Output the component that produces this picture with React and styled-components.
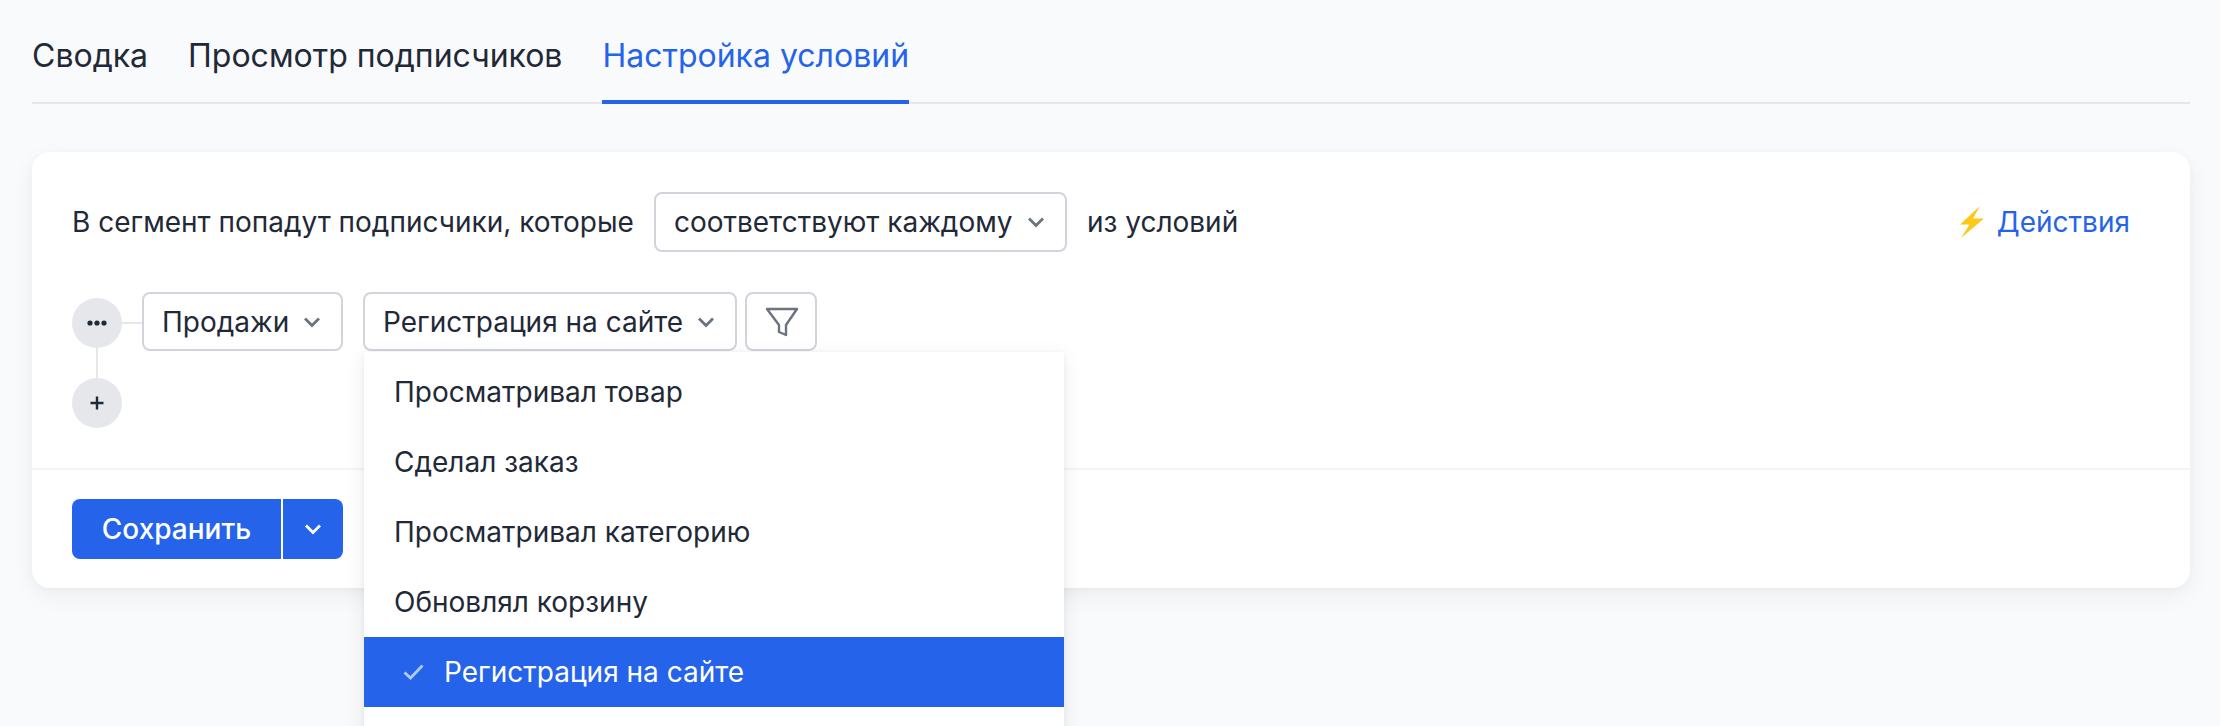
import React from 'react';
import styled, { createGlobalStyle } from 'styled-components';

const GlobalStyle = createGlobalStyle`
  html, body {
    margin: 0;
    padding: 0;
    background: #f9fafb;
  }
  body {
    font-family: Inter, "Liberation Sans", sans-serif;
    color: #1f2937;
    overflow: hidden;
  }
  * {
    box-sizing: border-box;
  }
`

const Page = styled.div`
  width: 2220px;
  height: 726px;
  padding: 0 30px 0 32px;
  overflow: hidden;
`
const Tabs = styled.nav`
  display: flex;
  gap: 40px;
  height: 104px;
  border-bottom: 2px solid #e5e7eb;
`
const Tab = styled.div`
  height: 104px;
  padding-top: 36px;
  font-size: 32px;
  line-height: 40px;
  color: ${props => (props.$active ? '#2563eb' : '#1f2937')};
  border-bottom: ${props => (props.$active ? '4px solid #2563eb' : 'none')};
`
const Card = styled.section`
  margin-top: 48px;
  background: #fff;
  border-radius: 18px;
  box-shadow: 0 8px 24px rgba(0, 0, 0, 0.05), 0 2px 8px rgba(0, 0, 0, 0.03);
`
const Body = styled.div`
  padding: 40px;
`
const RuleRow = styled.div`
  display: flex;
  align-items: center;
  font-size: 28px;
  height: 60px;
`
const Label = styled.span`
  margin-right: ${props => props.$right || 0}px;
  margin-left: ${props => props.$left || 0}px;
`
const Select = styled.div`
  display: flex;
  align-items: center;
  justify-content: space-between;
  width: ${props => props.$width}px;
  height: ${props => props.$height || 59}px;
  padding: 0 20px 0 18px;
  flex-shrink: 0;
  font-size: 28px;
  background: #fff;
  border: 2px solid #d1d5db;
  border-radius: 8px;
`
const Actions = styled.div`
  display: flex;
  align-items: center;
  gap: 12px;
  margin-left: auto;
  margin-right: 20px;
  font-size: 28px;
  color: #2563eb;
`
const Tree = styled.div`
  display: flex;
  align-items: flex-start;
  margin-top: 40px;
`
const Nodes = styled.div`
  display: flex;
  flex-direction: column;
  align-items: center;
  width: 50px;
  padding-top: 6px;
`
const Node = styled.div`
  display: flex;
  align-items: center;
  justify-content: center;
  width: 50px;
  height: 50px;
  border-radius: 50%;
  background: #e5e7eb;
`
const VLine = styled.div`
  width: 2px;
  height: 30px;
  background: #e5e7eb;
`
const HLine = styled.div`
  width: 20px;
  height: 2px;
  margin-top: 30px;
  background: #e5e7eb;
`
const Selects = styled.div`
  position: relative;
  display: flex;
`
const GroupGap = styled.div`
  width: ${props => props.$size}px;
`
const FilterButton = styled.div`
  display: flex;
  align-items: center;
  justify-content: center;
  width: 72px;
  height: 59px;
  padding-left: 2px;
  border: 2px solid #d1d5db;
  border-radius: 8px;
`
const Footer = styled.div`
  display: flex;
  padding: 29px 40px;
  border-top: 2px solid #f3f4f6;
`
const SaveButton = styled.div`
  display: flex;
  align-items: center;
  justify-content: center;
  width: 209px;
  height: 60px;
  font-size: 28px;
  font-weight: 500;
  color: #fff;
  background: #2563eb;
  border-radius: 8px 0 0 8px;
`
const SaveMenu = styled.div`
  display: flex;
  align-items: center;
  justify-content: center;
  width: 60px;
  height: 60px;
  margin-left: 2px;
  background: #2563eb;
  border-radius: 0 8px 8px 0;
`
const Menu = styled.div`
  position: absolute;
  z-index: 2;
  top: 60px;
  left: 222px;
  width: 700px;
  height: 420px;
  padding-top: 5px;
  background: #fff;
  box-shadow: 0 6px 20px rgba(0, 0, 0, 0.08), 0 1px 6px rgba(0, 0, 0, 0.05);
`
const MenuItem = styled.div`
  display: flex;
  align-items: center;
  gap: 20px;
  height: 70px;
  padding-left: ${props => (props.$selected ? '39px' : '30px')};
  font-size: 28px;
  color: ${props => (props.$selected ? '#fff' : '#1f2937')};
  background: ${props => (props.$selected ? '#2563eb' : 'transparent')};
`

const Chevron = ({ color = '#6b7280' }) => (
  <svg width="18" height="12" viewBox="0 0 18 12" fill="none">
    <path d="M2 2.5L9 9.5L16 2.5" stroke={color} strokeWidth="2.8" />
  </svg>
)

const Bolt = () => (
  <svg width="26" height="32" viewBox="0 0 26 32">
    <path d="M21 0L1 18.500H10.500L2 32L25 12.500H14L21 0Z" fill="#fbc916" />
  </svg>
)

const Funnel = () => (
  <svg width="34" height="30" viewBox="0 0 34 30" fill="none">
    <path d="M2 2H32L21 18V28L14 25V18L2 2Z" stroke="#6b7280" strokeWidth="2.400" strokeLinejoin="round" />
  </svg>
)

const Dots = () => (
  <svg width="20" height="6" viewBox="0 0 20 6">
    <circle cx="3" cy="3" r="2.600" fill="#1f2937" />
    <circle cx="10" cy="3" r="2.600" fill="#1f2937" />
    <circle cx="17" cy="3" r="2.600" fill="#1f2937" />
  </svg>
)

const Plus = () => (
  <svg width="16" height="16" viewBox="0 0 16 16" fill="none">
    <path d="M8 1.500V14.500M1.500 8H14.500" stroke="#1f2937" strokeWidth="2.400" />
  </svg>
)

const Check = () => (
  <svg width="21" height="16" viewBox="0 0 21 16" fill="none">
    <path d="M1.500 8.500L7.500 14L19.500 1.500" stroke="#b4c9f8" strokeWidth="2.800" />
  </svg>
)

const items = ['Просматривал товар', 'Сделал заказ', 'Просматривал категорию', 'Обновлял корзину', 'Регистрация на сайте']

const App = () => {
  return (
    <Page>
      <GlobalStyle />
      <Tabs>
        <Tab>Сводка</Tab>
        <Tab>Просмотр подписчиков</Tab>
        <Tab $active>Настройка условий</Tab>
      </Tabs>
      <Card>
        <Body>
          <RuleRow>
            <Label $right={20}>В сегмент попадут подписчики, которые</Label>
            <Select $width={413} $height={60}>
              соответствуют каждому <Chevron />
            </Select>
            <Label $left={20}>из условий</Label>
            <Actions>
              <Bolt /> Действия
            </Actions>
          </RuleRow>
          <Tree>
            <Nodes>
              <Node><Dots /></Node>
              <VLine />
              <Node><Plus /></Node>
            </Nodes>
            <HLine />
            <Selects>
              <Select $width={201}>
                Продажи <Chevron />
              </Select>
              <GroupGap $size={20} />
              <Select $width={374}>
                Регистрация на сайте <Chevron />
              </Select>
              <GroupGap $size={8} />
              <FilterButton><Funnel /></FilterButton>
              <Menu>
                {items.map((item, i) => (
                  <MenuItem key={item} $selected={i === 4}>
                    {i === 4 && <Check />}
                    {item}
                  </MenuItem>
                ))}
              </Menu>
            </Selects>
          </Tree>
        </Body>
        <Footer>
          <SaveButton>Сохранить</SaveButton>
          <SaveMenu><Chevron color="#fff" /></SaveMenu>
        </Footer>
      </Card>
    </Page>
  );
}

export default App;
